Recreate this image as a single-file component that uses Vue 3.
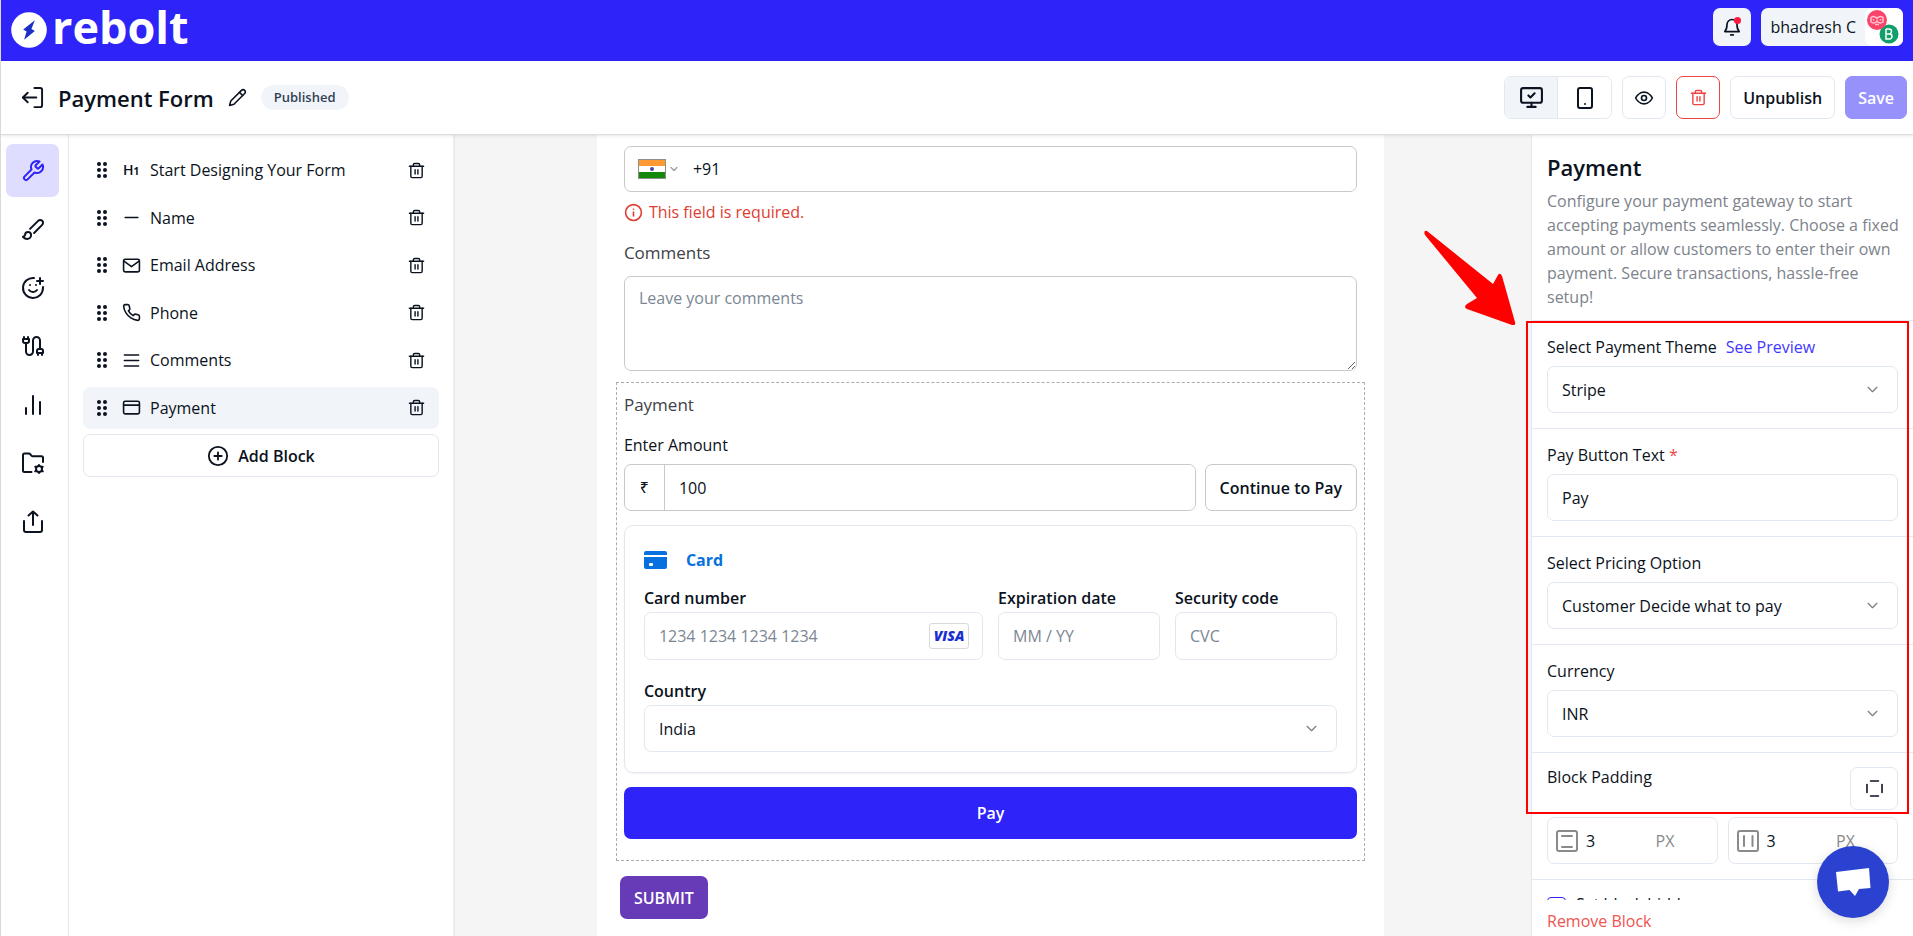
<script setup>
import { h, ref } from 'vue'

const paths = {
  wrench: ['M14.7 6.3a1 1 0 0 0 0 1.4l1.6 1.6a1 1 0 0 0 1.4 0l3.77-3.77a6 6 0 0 1-7.94 7.94l-6.91 6.91a2.12 2.12 0 0 1-3-3l6.91-6.91a6 6 0 0 1 7.94-7.94l-3.76 3.76z'],
  brush: ['m9.06 11.9 8.07-8.06a2.85 2.85 0 1 1 4.03 4.03l-8.06 8.08', 'M7.07 14.94c-1.66 0-3 1.35-3 3.02 0 1.33-2.5 1.52-2 2.02 1.08 1.1 2.49 2.02 4 2.02 2.2 0 4-1.8 4-4.04a3.01 3.01 0 0 0-3-3.02z'],
  smile: ['M22 11v1a10 10 0 1 1-9-10', 'M8 14s1.5 2 4 2 4-2 4-2', 'M9 9h.01', 'M15 9h.01', 'M16 5h6', 'M19 2v6'],
  cable: ['M4 9a2 2 0 0 1-2-2V5h6v2a2 2 0 0 1-2 2Z', 'M3 5V3', 'M7 5V3', 'M19 15V6.5a3.5 3.5 0 0 0-7 0v11a3.5 3.5 0 0 1-7 0V9', 'M17 21v-2', 'M21 21v-2', 'M22 19h-6v-2a2 2 0 0 1 2-2h2a2 2 0 0 1 2 2Z'],
  chart: ['M5 21v-6', 'M12 21V3', 'M19 21V9'],
  folder: ['M10.5 21H3.500a1.500 1.500 0 0 1-1.500-1.500V4a1.500 1.500 0 0 1 1.500-1.500h4.300a2 2 0 0 1 1.600.8l.9 1.200a2 2 0 0 0 1.600.8H20.500A1.500 1.500 0 0 1 22 6.800V11', 'M21 18a3 3 0 1 1-6 0 3 3 0 0 1 6 0', 'M18 14v1M18 21v1M21 16.200l.8-.5M14.200 20.300l.8-.5M21 19.800l.8.5M14.200 15.700l.8.5'],
  share: ['M3 11v9a2 2 0 0 0 2 2h14a2 2 0 0 0 2-2v-9', 'm16.500 5.500-4.500-4-4.500 4', 'M12 2v13'],
  exit: ['M14 2h6a2 2 0 0 1 2 2v16a2 2 0 0 1-2 2h-6', 'M16 12H2', 'm7 7-5 5 5 5'],
  pencil: ['M17 3a2.830 2.830 0 1 1 4 4L7.500 20.500 2 22l1.500-5.500Z', 'm14.500 5.500 4 4'],
  bell: ['M3.300 17.500c1.600-1.600 2.700-3.200 2.700-8.500a6 6 0 0 1 12 0c0 5.300 1.100 6.900 2.700 8.500Z', 'M10.500 21.500h3'],
  monitor: ['M4 3h16a2 2 0 0 1 2 2v10a2 2 0 0 1-2 2H4a2 2 0 0 1-2-2V5a2 2 0 0 1 2-2Z', 'm9 10 2 2 4-4', 'M12 17v4', 'M8 21h8'],
  phoneDevice: ['M7 2h10a2 2 0 0 1 2 2v16a2 2 0 0 1-2 2H7a2 2 0 0 1-2-2V4a2 2 0 0 1 2-2Z', 'M12 18h.01'],
  eye: ['M2 12s3.500-7 10-7 10 7 10 7-3.500 7-10 7-10-7-10-7Z', 'M15 12a3 3 0 1 1-6 0 3 3 0 0 1 6 0'],
  trash: ['M2 6h20', 'M4 6v14a2 2 0 0 0 2 2h12a2 2 0 0 0 2-2V6', 'M7.500 6V4a2 2 0 0 1 2-2h5a2 2 0 0 1 2 2v2', 'M10 11v6', 'M14 11v6'],
  minus: ['M4 12h16'],
  mail: ['M4 4h16a2 2 0 0 1 2 2v12a2 2 0 0 1-2 2H4a2 2 0 0 1-2-2V6a2 2 0 0 1 2-2Z', 'm2.500 6.500 9.500 7 9.500-7'],
  phone: ['M22 16.920v3a2 2 0 0 1-2.180 2 19.790 19.790 0 0 1-8.630-3.070 19.500 19.500 0 0 1-6-6 19.790 19.790 0 0 1-3.070-8.670A2 2 0 0 1 4.110 2h3a2 2 0 0 1 2 1.720c.13.960.36 1.900.7 2.810a2 2 0 0 1-.45 2.110L8.090 9.910a16 16 0 0 0 6 6l1.270-1.270a2 2 0 0 1 2.110-.45c.91.340 1.850.57 2.810.7A2 2 0 0 1 22 16.920z'],
  lines: ['M3 5h18', 'M3 12h18', 'M3 19h18'],
  card: ['M4 4h16a2 2 0 0 1 2 2v12a2 2 0 0 1-2 2H4a2 2 0 0 1-2-2V6a2 2 0 0 1 2-2Z', 'M2 9h20'],
  plus: ['M22 12a10 10 0 1 1-20 0 10 10 0 0 1 20 0', 'M8 12h8', 'M12 8v8'],
  info: ['M22 12a10 10 0 1 1-20 0 10 10 0 0 1 20 0', 'M12 16.500V11.500', 'M12 7.800h.01'],
  down: ['m5 8.500 7 7 7-7'],
  vertical: ['M4 2h16a2 2 0 0 1 2 2v16a2 2 0 0 1-2 2H4a2 2 0 0 1-2-2V4a2 2 0 0 1 2-2Z', 'M7 7h10', 'M7 18h10'],
  horizontal: ['M4 2h16a2 2 0 0 1 2 2v16a2 2 0 0 1-2 2H4a2 2 0 0 1-2-2V4a2 2 0 0 1 2-2Z', 'M8 7v10', 'M16.500 7v10'],
  sides: ['M7 2.500h10', 'M7 21.500h10', 'M2.500 7v10', 'M21.500 7v10'],
}

const Icon = (props) =>
  h(
    'svg',
    {
      viewBox: '0 0 24 24',
      width: props.size,
      height: props.size,
      fill: 'none',
      stroke: 'currentColor',
      'stroke-width': props.weight || 2,
      'stroke-linecap': 'round',
      'stroke-linejoin': 'round',
      'aria-hidden': 'true',
    },
    paths[props.name].map((d) => h('path', { d })),
  )
Icon.props = ['name', 'size', 'weight']

const tools = [
  { icon: 'wrench', label: 'Build' },
  { icon: 'brush', label: 'Design' },
  { icon: 'smile', label: 'Thank you page' },
  { icon: 'cable', label: 'Integrations' },
  { icon: 'chart', label: 'Results' },
  { icon: 'folder', label: 'Settings' },
  { icon: 'share', label: 'Share' },
]
const blocks = [
  { icon: 'h1', label: 'Start Designing Your Form' },
  { icon: 'minus', label: 'Name' },
  { icon: 'mail', label: 'Email Address' },
  { icon: 'phone', label: 'Phone' },
  { icon: 'lines', label: 'Comments' },
  { icon: 'card', label: 'Payment' },
]
const activeTool = ref('wrench')
const activeBlock = ref('Payment')
const payText = ref('Pay')
const amount = ref('100')
const phone = ref('+91')
const padY = ref('3')
const padX = ref('3')
</script>

<template>
  <div class="app">
    <header class="topbar">
      <a href="#" class="logo" aria-label="rebolt">
        <svg width="36" height="36" viewBox="0 0 37 37" aria-hidden="true">
          <circle cx="18.500" cy="18.500" r="18.300" fill="#fff" />
          <path d="M24.500 8.500 12.500 18l3.500 2L13.500 28.500 24.500 19.500l-3.500-2Z" fill="#1b2fc4" />
        </svg>
        <span>rebolt</span>
      </a>
      <div class="account">
        <button class="bell" aria-label="Notifications">
          <Icon name="bell" size="20" />
          <i class="dot"></i>
        </button>
        <button class="user">
          <span>bhadresh C</span>
          <svg class="avatar" width="38" height="38" viewBox="0 0 38 38" aria-hidden="true">
            <rect width="38" height="38" rx="7" fill="#fff" />
            <circle cx="24" cy="26" r="9.500" fill="#109e6b" />
            <path d="M21 21v10h3.500a2.500 2.500 0 0 0 0-5H21m0-5h3a2.500 2.500 0 0 1 0 5" fill="none" stroke="#fff" stroke-width="1.500" />
            <circle cx="12" cy="12" r="10" fill="#fb4469" />
            <g fill="none" stroke="#ffc4d0" stroke-width="1.500">
              <path d="M6 9.500c2-1.500 5-1 6 1 1-2 4-2.500 6-1v4.500c-2 1.500-5 1-6-1-1 2-4 2.500-6 1Z" />
              <path d="M10 16.500h4M8.500 11v1.500M15.500 11v1.500" />
            </g>
          </svg>
        </button>
      </div>
    </header>

    <div class="toolbar">
      <button class="bare" aria-label="Back"><Icon name="exit" size="23" /></button>
      <h1>Payment Form</h1>
      <button class="bare rename" aria-label="Rename"><Icon name="pencil" size="19" /></button>
      <span class="badge">Published</span>
      <div class="actions">
        <div class="devices">
          <button class="on" aria-label="Desktop"><Icon name="monitor" size="25" /></button>
          <button aria-label="Mobile"><Icon name="phoneDevice" size="24" /></button>
        </div>
        <button class="btn square" aria-label="Preview"><Icon name="eye" size="20" /></button>
        <button class="btn square danger" aria-label="Delete"><Icon name="trash" size="17" /></button>
        <button class="btn">Unpublish</button>
        <button class="btn save">Save</button>
      </div>
    </div>

    <div class="body">
      <nav class="rail" aria-label="Tools">
        <div class="tools">
          <button
            v-for="t in tools"
            :key="t.icon"
            :class="{ on: activeTool === t.icon }"
            :aria-label="t.label"
            @click="activeTool = t.icon"
          >
            <Icon :name="t.icon" size="24" />
          </button>
        </div>
      </nav>

      <aside class="blocks">
        <ul>
          <li v-for="b in blocks" :key="b.label" :class="{ on: activeBlock === b.label }">
            <svg class="grip" width="10" height="18" viewBox="0 0 10 18" fill="currentColor" aria-hidden="true">
              <circle cx="2" cy="3" r="2" /><circle cx="8" cy="3" r="2" />
              <circle cx="2" cy="9" r="2" /><circle cx="8" cy="9" r="2" />
              <circle cx="2" cy="15" r="2" /><circle cx="8" cy="15" r="2" />
            </svg>
            <span class="kind">
              <span v-if="b.icon === 'h1'" class="heading">H<small>1</small></span>
              <Icon v-else :name="b.icon" size="19" />
            </span>
            <button class="bare name" @click="activeBlock = b.label">{{ b.label }}</button>
            <button class="bare" :aria-label="'Delete ' + b.label"><Icon name="trash" size="17" weight="2" /></button>
          </li>
        </ul>
        <button class="btn add"><Icon name="plus" size="22" /> Add Block</button>
      </aside>

      <main class="canvas">
        <form class="sheet" @submit.prevent>
          <div class="phone-field">
            <button type="button" class="bare flag" aria-label="Country code">
              <svg width="28" height="20" viewBox="0 0 28 20" aria-hidden="true">
                <rect width="28" height="20" fill="#8d8d8d" />
                <rect x="1" y="1" width="26" height="6" fill="#ff9933" />
                <rect x="1" y="7" width="26" height="6" fill="#fff" />
                <rect x="1" y="13" width="26" height="6" fill="#138808" />
                <circle cx="14" cy="10" r="2" fill="#4b4ba8" />
              </svg>
              <Icon name="down" size="10" weight="3" />
            </button>
            <input v-model="phone" aria-label="Phone" type="text" />
          </div>
          <p class="error"><Icon name="info" size="19" /> This field is required.</p>
          <label class="title" for="comments">Comments</label>
          <textarea id="comments" placeholder="Leave your comments"></textarea>

          <section class="payment">
            <h2 class="title">Payment</h2>
            <label for="amount" class="amount-label">Enter Amount</label>
            <div class="amount-row">
              <div class="amount">
                <span>₹</span>
                <input id="amount" v-model="amount" type="text" />
              </div>
              <button type="button" class="btn continue">Continue to Pay</button>
            </div>

            <div class="card-box">
              <div class="method">
                <svg width="23" height="18" viewBox="0 0 23 18" aria-hidden="true">
                  <path d="M2 0h19a2 2 0 0 1 2 2v2H0V2a2 2 0 0 1 2-2Z" fill="#0570de" />
                  <path d="M0 6h23v10a2 2 0 0 1-2 2H2a2 2 0 0 1-2-2Z" fill="#0570de" />
                  <rect x="5" y="12" width="4" height="3" rx="1" fill="#fff" />
                </svg>
                Card
              </div>
              <div class="card-grid">
                <div class="field wide">
                  <label for="num">Card number</label>
                  <div class="with-brand">
                    <input id="num" type="text" placeholder="1234 1234 1234 1234" />
                    <span class="visa">VISA</span>
                  </div>
                </div>
                <div class="field">
                  <label for="exp">Expiration date</label>
                  <input id="exp" type="text" placeholder="MM / YY" />
                </div>
                <div class="field">
                  <label for="cvc">Security code</label>
                  <input id="cvc" type="text" placeholder="CVC" />
                </div>
              </div>
              <div class="field country">
                <label for="country">Country</label>
                <div class="select">
                  <select id="country"><option>India</option></select>
                  <Icon name="down" size="15" />
                </div>
              </div>
            </div>
            <button type="button" class="pay">{{ payText }}</button>
          </section>
          <button class="submit">SUBMIT</button>
        </form>
      </main>

      <aside class="settings">
        <div class="scroll">
          <div class="intro">
            <h2>Payment</h2>
            <p>
              Configure your payment gateway to start accepting payments seamlessly. Choose a fixed amount
              or allow customers to enter their own payment. Secure transactions, hassle-free setup!
            </p>
          </div>
          <div class="group">
            <div class="caption"><label for="theme">Select Payment Theme</label><a href="#">See Preview</a></div>
            <div class="select">
              <select id="theme"><option>Stripe</option></select>
              <Icon name="down" size="15" />
            </div>
          </div>
          <div class="group">
            <label class="caption" for="paytext">Pay Button Text&nbsp;<em>*</em></label>
            <input id="paytext" v-model="payText" type="text" />
          </div>
          <div class="group">
            <label class="caption" for="pricing">Select Pricing Option</label>
            <div class="select">
              <select id="pricing"><option>Customer Decide what to pay</option></select>
              <Icon name="down" size="15" />
            </div>
          </div>
          <div class="group">
            <label class="caption" for="currency">Currency</label>
            <div class="select">
              <select id="currency"><option>INR</option></select>
              <Icon name="down" size="15" />
            </div>
          </div>
          <div class="group">
            <div class="padding-head">
              <span>Block Padding</span>
              <button class="btn square" aria-label="Edit each side"><Icon name="sides" size="19" /></button>
            </div>
            <div class="padding-row">
              <label class="unit"><Icon name="vertical" size="24" /><input v-model="padY" type="text" aria-label="Vertical padding" /><span>PX</span></label>
              <label class="unit"><Icon name="horizontal" size="24" /><input v-model="padX" type="text" aria-label="Horizontal padding" /><span>PX</span></label>
            </div>
          </div>
          <div class="group toggle">
            <label><input type="checkbox" /><span>Set block hidden</span></label>
          </div>
        </div>
        <button class="bare remove">Remove Block</button>

        <div class="outline"></div>
        <svg class="arrow" width="94" height="96" viewBox="0 0 94 96" aria-hidden="true">
          <path d="M4 2 70 55l5-9q2-3 4 1l13 46q1 4-3 3L44 80q-4-2 0-5l10-6L2 6Q0 1 4 2Z" fill="#f00" />
        </svg>
        <button class="chat" aria-label="Open chat">
          <svg width="36" height="30" viewBox="0 0 36 30" aria-hidden="true">
            <path d="M1 5 34 1l1.500 20-11.500 1-4 7-5.500-6L3 24.500Z" fill="#fff" />
          </svg>
        </button>
      </aside>
    </div>
  </div>
</template>

<style>
body {
  margin: 0;
}
</style>

<style scoped>
.app {
  --ink: #0b1220;
  --line: #e2e8f0;
  --blue: #2e24f9;
  display: flex;
  flex-direction: column;
  height: 100vh;
  overflow: hidden;
  border-left: 1px solid #d9d9dc;
  box-sizing: border-box;
  background: #fff;
  color: var(--ink);
  font-family: 'Open Sans', 'Noto Sans', sans-serif;
  font-size: 16px;
  line-height: 24px;
}
.app *,
.app *::before {
  box-sizing: border-box;
}
button,
input,
select,
textarea {
  font: inherit;
  color: inherit;
}
button {
  cursor: pointer;
  display: flex;
  align-items: center;
  justify-content: center;
  margin: 0;
  padding: 0;
  white-space: nowrap;
}
svg {
  display: block;
  flex: none;
}
h1,
h2,
p,
ul {
  margin: 0;
  padding: 0;
}
a {
  text-decoration: none;
}
.bare {
  border: 0;
  background: none;
}
.btn {
  height: 43px;
  padding: 0 12px;
  border: 1px solid var(--line);
  border-radius: 7px;
  background: #fff;
  font-weight: 600;
}
.square {
  width: 44px;
  padding: 0;
}
input,
select,
textarea {
  width: 100%;
  min-width: 0;
  height: 47px;
  margin: 0;
  padding: 0 14px;
  border: 1px solid var(--line);
  border-radius: 7px;
  background: #fff;
  outline: none;
}
select {
  appearance: none;
}
::placeholder {
  color: #7b8794;
  opacity: 1;
}
.select {
  position: relative;
}
.select svg {
  position: absolute;
  right: 18px;
  top: 16px;
  color: #7b7f88;
  pointer-events: none;
}

/* Top bar */
.topbar {
  display: flex;
  flex: none;
  justify-content: space-between;
  height: 61px;
  padding: 8px 10px;
  background: var(--blue);
}
.logo {
  display: flex;
  align-items: flex-start;
  gap: 5px;
  color: #fff;
  font-size: 45px;
  line-height: 38px;
  font-weight: 700;
}
.logo svg {
  margin-top: 4px;
}
.account {
  display: flex;
  gap: 10px;
  height: 38px;
}
.bell,
.user {
  position: relative;
  border: 0;
  border-radius: 7px;
  background: #f1f5f9;
}
.bell {
  width: 38px;
}
.dot {
  position: absolute;
  top: 9px;
  right: 10px;
  width: 7px;
  height: 7px;
  border-radius: 50%;
  background: #ff1744;
}
.user {
  gap: 9px;
  padding-left: 10px;
  font-weight: 500;
}

/* Form toolbar */
.toolbar {
  position: relative;
  z-index: 1;
  display: flex;
  flex: none;
  align-items: center;
  height: 74px;
  padding: 0 6px 0 20px;
  border-bottom: 1px solid #dadde2;
  box-shadow: 0 1px 3px #0000001a;
}
h1 {
  margin-left: 14px;
  font-size: 22px;
  line-height: 32px;
  font-weight: 600;
}
.rename {
  margin-left: 14px;
}
.badge {
  margin-left: 14px;
  padding: 0 13px;
  border-radius: 13px;
  background: #f1f5f9;
  color: #334155;
  font-size: 13px;
  line-height: 25px;
  font-weight: 600;
}
.actions {
  display: flex;
  gap: 10px;
  margin-left: auto;
}
.devices {
  display: flex;
  overflow: hidden;
  border: 1px solid var(--line);
  border-radius: 7px;
}
.devices button {
  width: 53px;
  border: 0;
  background: #fff;
}
.devices .on {
  background: #f1f5f9;
  border-right: 1px solid var(--line);
}
.danger {
  color: #ef4444;
  border-color: #ef4444;
}
.save {
  border-color: #9791fc;
  background: #9791fc;
  color: #fff;
}

.body {
  display: flex;
  flex: 1;
  min-height: 0;
}

/* Tool rail */
.rail {
  flex: none;
  width: 68px;
  padding: 9px 9px 0 5px;
  border-right: 1px solid var(--line);
}
.tools {
  display: flex;
  flex-direction: column;
  justify-content: space-between;
  min-height: 404px;
}
.rail button {
  height: 53px;
  border: 0;
  border-radius: 7px;
  background: none;
}
.rail .on {
  background: #dfddff;
  color: var(--blue);
}

/* Block list */
.blocks {
  flex: none;
  width: 386px;
  padding: 14px 14px 0;
  border-right: 2px solid #e9edf2;
}
.blocks ul {
  display: flex;
  flex-direction: column;
  justify-content: space-between;
  min-height: 280px;
  list-style: none;
}
.blocks li {
  display: flex;
  align-items: center;
  height: 42px;
  padding: 0 14px;
  border-radius: 7px;
}
.blocks li.on {
  background: #f1f5f9;
}
.kind {
  display: flex;
  justify-content: center;
  width: 38px;
  margin-left: 5px;
}
.heading {
  font-size: 14px;
  font-weight: 600;
}
.heading small {
  font-size: 10px;
  font-weight: 700;
}
.name {
  flex: 1;
  justify-content: flex-start;
}
.add {
  width: 100%;
  gap: 9px;
  margin-top: 5px;
}

/* Form preview */
.canvas {
  display: flex;
  flex: 1;
  justify-content: center;
  min-width: 0;
  padding-right: 5px;
  background: #f5f5f5;
}
.sheet {
  width: 73.5%;
  padding: 11px 27px 0;
  background: #fff;
}
.phone-field {
  display: flex;
  height: 46px;
  border: 1px solid #c9c9cc;
  border-radius: 7px;
}
.phone-field input {
  height: 44px;
  border: 0;
}
.flag {
  gap: 3px;
  padding-left: 13px;
  color: #9a9a9a;
}
.error {
  display: flex;
  align-items: center;
  gap: 6px;
  margin: 8px 0 17px;
  color: #e03c31;
}
.title {
  display: block;
  color: #404247;
  font-size: 17px;
  line-height: 24px;
  font-weight: 400;
}
textarea {
  display: block;
  height: 95px;
  margin-top: 11px;
  padding: 9px 14px;
  border-color: #c9c9cc;
}
.payment {
  margin: 11px -8px 0;
  padding: 10px 7px 21px;
  border: 1px dashed #a9abb5;
}
.amount-label {
  display: block;
  margin: 16px 0 7px;
}
.amount-row {
  display: flex;
  gap: 9px;
}
.amount {
  display: flex;
  flex: 1;
  height: 47px;
  border: 1px solid #c9c9cc;
  border-radius: 7px;
}
.amount span {
  width: 40px;
  border-right: 1px solid #c9c9cc;
  line-height: 45px;
  text-align: center;
}
.amount input {
  flex: 1;
  height: 45px;
  border: 0;
}
.continue {
  height: 47px;
  padding: 0 14px;
  border-color: #c9c9cc;
}
.card-box {
  margin-top: 14px;
  padding: 22px 19px 20px;
  border: 1px solid var(--line);
  border-radius: 9px;
  box-shadow: 0 1px 2px #0000000d;
}
.method {
  display: flex;
  align-items: center;
  gap: 19px;
  margin-bottom: 14px;
  color: #0570de;
  font-weight: 700;
}
.card-grid {
  display: grid;
  grid-template-columns: repeat(4, 1fr);
  gap: 15px;
}
.wide {
  grid-column: span 2;
}
.field label {
  display: block;
  margin-bottom: 2px;
  font-weight: 600;
}
.card-grid input {
  display: block;
  height: 48px;
}
.with-brand {
  position: relative;
}
.visa {
  position: absolute;
  top: 11px;
  right: 14px;
  width: 40px;
  border: 1px solid #d9d9dc;
  border-radius: 3px;
  color: #1a2fd0;
  font-size: 14px;
  font-weight: 800;
  font-style: italic;
  text-align: center;
}
.country {
  margin-top: 19px;
}
.pay {
  width: 100%;
  height: 52px;
  margin-top: 14px;
  border: 0;
  border-radius: 7px;
  background: var(--blue);
  color: #fff;
  font-weight: 600;
}
.submit {
  height: 43px;
  margin: 15px 0 0 -4px;
  padding: 0 14px;
  border: 0;
  border-radius: 7px;
  background: #673ab7;
  color: #fff;
  font-weight: 600;
}

/* Block settings */
.settings {
  position: relative;
  display: flex;
  flex: none;
  flex-direction: column;
  width: 382px;
  border-left: 1px solid var(--line);
}
.scroll {
  flex: 1;
  min-height: 0;
  overflow: hidden;
}
.intro {
  padding: 16px 6px 11px 15px;
}
.intro h2 {
  font-size: 22px;
  line-height: 32px;
  font-weight: 600;
}
.intro p {
  margin-top: 6px;
  color: #7d828b;
}
.group {
  padding: 14px 15px 15px;
  border-top: 1px solid var(--line);
}
.caption {
  display: flex;
  gap: 9px;
  margin-bottom: 7px;
}
label.caption {
  gap: 0;
}
.caption a {
  color: #4338ff;
}
.caption em {
  color: #ef4444;
  font-style: normal;
}
.group > input,
.select select {
  display: block;
}
.padding-head {
  display: flex;
  justify-content: space-between;
  line-height: 20px;
}
.padding-head .square {
  width: 48px;
}
.padding-row {
  display: grid;
  grid-template-columns: 1fr 1fr;
  gap: 10px;
  margin-top: 7px;
}
.unit {
  display: flex;
  align-items: center;
  height: 47px;
  padding-left: 7px;
  border: 1px solid var(--line);
  border-radius: 7px;
  color: #8a8a8a;
}
.unit input {
  flex: 1;
  height: 40px;
  padding: 0 7px;
  border: 0;
  color: var(--ink);
}
.unit span {
  width: 60px;
  margin-right: 1px;
}
.toggle label {
  display: flex;
  align-items: flex-start;
  gap: 10px;
  line-height: 20px;
}
.toggle input {
  appearance: none;
  width: 19px;
  height: 19px;
  margin-top: 3px;
  padding: 0;
  border: 1px solid var(--blue);
  border-radius: 4px;
}
.remove {
  flex: none;
  justify-content: flex-start;
  height: 36px;
  padding: 6px 15px 0;
  color: #ef5350;
}
.outline {
  position: absolute;
  top: 186px;
  right: 4px;
  left: -6px;
  height: 493px;
  border: 2px solid #f00;
  pointer-events: none;
}
.arrow {
  position: absolute;
  top: 94px;
  left: -109px;
}
.chat {
  position: absolute;
  right: 24px;
  bottom: 18px;
  width: 72px;
  height: 72px;
  border: 0;
  border-radius: 50%;
  background: #2a42cf;
  box-shadow: 0 3px 12px #00000026;
}
</style>
